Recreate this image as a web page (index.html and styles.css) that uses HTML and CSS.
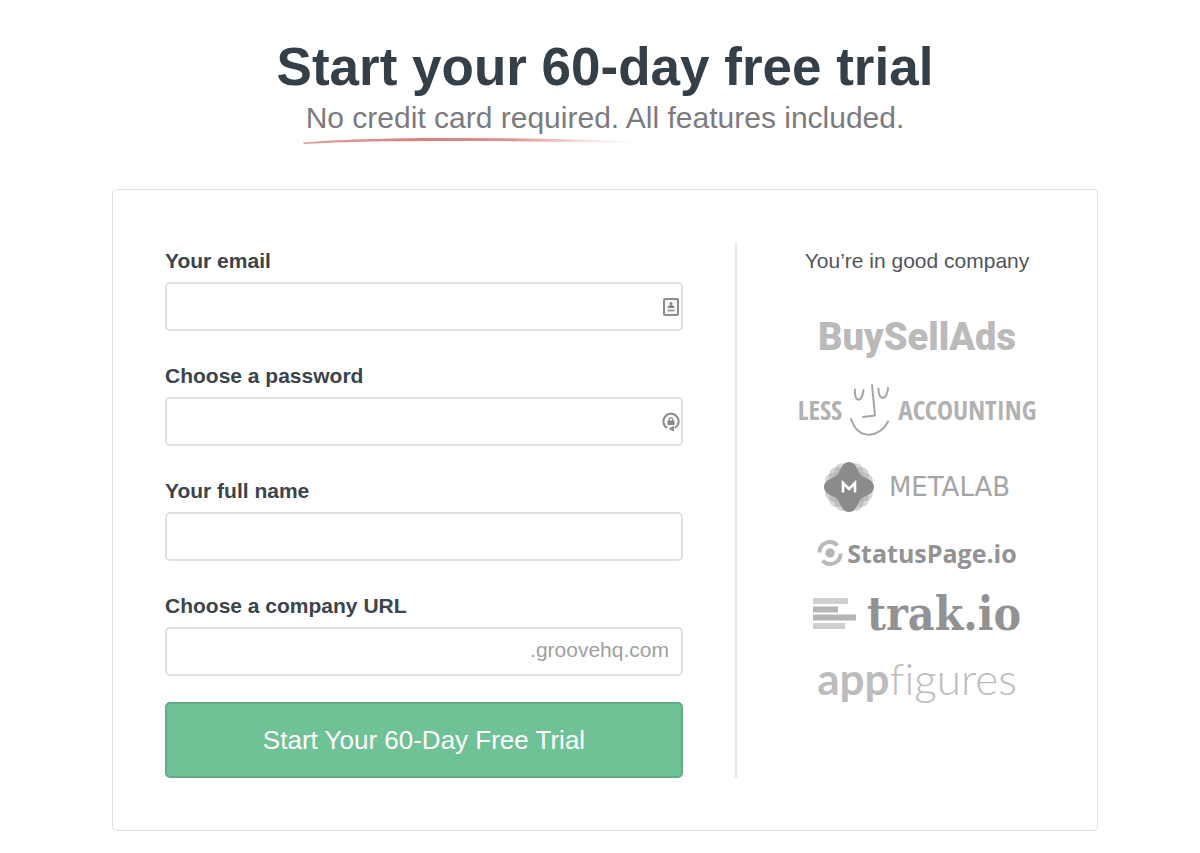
FILE: index.html
```html
<!DOCTYPE html>
<html lang="en">
<head>
<meta charset="utf-8">
<meta name="viewport" content="width=device-width, initial-scale=1">
<title>Start your 60-day free trial</title>
<link rel="stylesheet" href="styles.css">
</head>
<body>
<main class="page">
  <header class="intro">
    <h1 class="title">Start your 60-day free trial</h1>
    <p class="subtitle">No credit card required. All features included.</p>
    <svg class="swoosh" viewBox="0 0 350 8" aria-hidden="true">
      <defs>
        <linearGradient id="fade" x1="0" x2="1" y1="0" y2="0">
          <stop offset="0" stop-color="#e2a29d"/>
          <stop offset=".35" stop-color="#d3827c"/>
          <stop offset=".6" stop-color="#dc9691"/>
          <stop offset="1" stop-color="#f6dedc" stop-opacity="0"/>
        </linearGradient>
      </defs>
      <path fill="url(#fade)" d="M0 4.600C40 1 95 0 150 0c80 0 140 1.500 200 4.600C290 4.600 240 3.200 180 3 110 2.800 50 3 1 6z"/>
    </svg>
  </header>

  <section class="card">
    <form class="signup">
      <div class="row">
        <label class="label" for="email">Your email</label>
        <div class="field">
          <input class="input" id="email" type="email">
          <svg class="field-icon" width="18" height="20" viewBox="0 0 18 20" aria-hidden="true">
            <rect x="2" y="2" width="14" height="16" rx="1" fill="#f7f7f7" stroke="#8b8b8b" stroke-width="2"/>
            <circle cx="9" cy="6.500" r="1.500" fill="#888"/>
            <path d="M5.500 11c0-4 7-4 7 0z" fill="#888"/>
            <path d="M5.500 13.500h7" stroke="#999" stroke-width="1.800"/>
          </svg>
        </div>
      </div>
      <div class="row">
        <label class="label" for="password">Choose a password</label>
        <div class="field">
          <input class="input" id="password" type="password">
          <svg class="field-icon" width="18" height="20" viewBox="0 0 18 20" aria-hidden="true">
            <path d="M5.200 16A7.600 7.600 0 1 1 12.800 16" fill="none" stroke="#8b8b8b" stroke-width="2"/>
            <path d="M12 13.500v6L6.500 17z" fill="#8b8b8b"/>
            <rect x="5.500" y="8.500" width="7" height="4.500" fill="#888"/>
            <path d="M7.300 9V7.500a1.700 1.700 0 0 1 3.400 0V9" fill="none" stroke="#888" stroke-width="1.300"/>
          </svg>
        </div>
      </div>
      <div class="row">
        <label class="label" for="name">Your full name</label>
        <div class="field"><input class="input" id="name" type="text"></div>
      </div>
      <div class="row">
        <label class="label" for="url">Choose a company URL</label>
        <div class="field">
          <input class="input" id="url" type="text">
          <span class="suffix">.groovehq.com</span>
        </div>
      </div>
      <button class="submit" type="submit">Start Your 60-Day Free Trial</button>
    </form>

    <aside class="company">
      <h2 class="company-title">You’re in good company</h2>
      <ul class="logos">
        <li class="logo buysellads">BuySellAds</li>
        <li class="logo less">
          <span>LESS</span>
          <svg class="face" width="40" height="54" viewBox="0 0 40 54" fill="none" stroke="#a5a5a5" stroke-width="2" stroke-linecap="round" stroke-linejoin="round" aria-hidden="true">
            <path d="M5 7.500C4 21 12 21 13.500 8M28.500 6.500c0 14 9 11 9.500-.5M22 3l3 30.500-12 1.500M1 37c7 21 28 20 37 2.500"/>
          </svg>
          <span>ACCOUNTING</span>
        </li>
        <li class="logo metalab">
          <svg width="50" height="52" viewBox="-25 -26 50 52" aria-hidden="true">
            <defs>
              <path id="petal" d="M0-25C5-25 7-21 9.500-16 11-12 12-11 16-9.500 21-7 25-5 25 0S21 7 16 9.500C12 11 11 12 9.500 16 7 21 5 25 0 25S-7 21-9.500 16C-11 12-12 11-16 9.500-21 7-25 5-25 0S-21-7-16-9.500C-12-11-11-12-9.500-16-7-21-5-25 0-25z"/>
            </defs>
            <g fill="#aaa" fill-opacity=".5">
              <use href="#petal" transform="rotate(22)"/>
              <use href="#petal" transform="rotate(45)"/>
              <use href="#petal" transform="rotate(68)"/>
            </g>
            <use href="#petal" fill="#8b8b8b"/>
            <path d="M-6 5.500V-4L0 2 6-4V5.500" fill="none" stroke="#fff" stroke-width="2.600"/>
          </svg>
          <span>METALAB</span>
        </li>
        <li class="logo statuspage">
          <svg width="26" height="26" viewBox="-13 -13 26 26" fill="none" stroke="#b9b9b9" aria-hidden="true">
            <circle r="4.700" fill="#b5b5b5" stroke="none"/>
            <path stroke-width="4" d="M-10.500-.5A10.300 10.300 0 0 1 7.500-7.500M10.500.5A10.300 10.300 0 0 1-7.500 7.500"/>
          </svg>
          <span>StatusPage.io</span>
        </li>
        <li class="logo trak">
          <svg width="44" height="32" viewBox="0 0 44 32" aria-hidden="true">
            <path fill="#cfcfcf" d="M0 0h35v6H0zM0 25h32v6H0z"/>
            <path fill="#b5b5b5" d="M0 8.500h25v6H0zM0 16.500h43v6H0z"/>
          </svg>
          <span>trak.io</span>
        </li>
        <li class="logo appfigures"><span class="app">app</span>figures</li>
      </ul>
    </aside>
  </section>
</main>
</body>
</html>
```
FILE: styles.css
```css
* {
  box-sizing: border-box;
}

body {
  margin: 0;
  background: #fff;
  color: #3a444c;
  font-family: "Liberation Sans", Arial, sans-serif;
}

.page {
  max-width: 1018px;
  margin: 0 auto;
  padding: 36px 11px 21px 21px;
}

.intro {
  display: flex;
  flex-direction: column;
  align-items: center;
}

.title {
  margin: 0;
  color: #343f47;
  font-size: 53px;
  line-height: 62px;
  text-align: center;
}

.subtitle {
  margin: 0;
  color: #7b7b7d;
  font-size: 30px;
  line-height: 40px;
  text-align: center;
}

.swoosh {
  width: 350px;
  height: 8px;
  margin-right: 254px;
}

.card {
  display: grid;
  grid-template-columns: minmax(0, 1fr) 310px;
  gap: 52px;
  margin-top: 43px;
  padding: 52px;
  border: 1px solid #e0e0e0;
  border-radius: 5px;
}

.signup {
  display: flex;
  flex-direction: column;
  gap: 26px;
}

.label {
  display: block;
  margin-bottom: 2px;
  font-size: 21px;
  font-weight: 700;
  line-height: 38px;
}

.field {
  display: flex;
  align-items: center;
  height: 49px;
  padding-right: 1px;
  border: 2px solid #e0e0e0;
  border-radius: 5px;
}

.field:focus-within {
  border-color: #6fc196;
}

.input {
  flex: 1;
  min-width: 0;
  height: 100%;
  padding: 0 12px;
  border: 0;
  outline: 0;
  background: transparent;
  color: inherit;
  font: inherit;
  font-size: 21px;
}

.field-icon {
  flex: none;
}

.suffix {
  padding: 0 11px 4px 0;
  color: #a0a0a0;
  font-size: 21px;
}

.submit {
  height: 76px;
  border: 2px solid #62ab85;
  border-radius: 5px;
  background: #6fc196;
  color: #fff;
  font: inherit;
  font-size: 26px;
  cursor: pointer;
}

.company {
  padding-left: 52px;
  border-left: 2px solid #e9e9e9;
}

.company-title {
  margin: 0;
  color: #50555b;
  font-size: 21px;
  font-weight: 400;
  line-height: 38px;
  text-align: center;
}

.logos {
  display: flex;
  flex-direction: column;
  margin: 24px 0 0;
  padding: 0;
  list-style: none;
}

.logo {
  display: flex;
  align-items: center;
  justify-content: center;
  height: 66px;
  white-space: nowrap;
}

.buysellads {
  color: #bababa;
  font-family: Roboto, sans-serif;
  font-size: 38px;
  font-weight: 900;
}

.less {
  gap: 8px;
  height: 78px;
  color: #b2b2b2;
  font-family: "Open Sans Condensed", "Open Sans", sans-serif;
  font-size: 27px;
  font-stretch: condensed;
  font-weight: 300;
}

.face {
  flex: none;
}

.metalab {
  gap: 15px;
  height: 78px;
  color: #a5a5a5;
  font-family: "DejaVu Sans", sans-serif;
  font-size: 26px;
}

.statuspage {
  gap: 4px;
  height: 54px;
  color: #939393;
  font-family: "Open Sans", sans-serif;
  font-size: 25px;
  font-weight: 700;
}

.trak {
  gap: 10px;
  height: 68px;
  color: #929292;
  font-family: "DejaVu Serif Condensed", "DejaVu Serif", serif;
  font-size: 46px;
  font-weight: 700;
}

.appfigures {
  height: 60px;
  color: #bcbcbc;
  font-family: Lato, sans-serif;
  font-size: 44px;
  font-variant-ligatures: none;
  font-weight: 300;
}

.app {
  font-weight: 700;
}
```
